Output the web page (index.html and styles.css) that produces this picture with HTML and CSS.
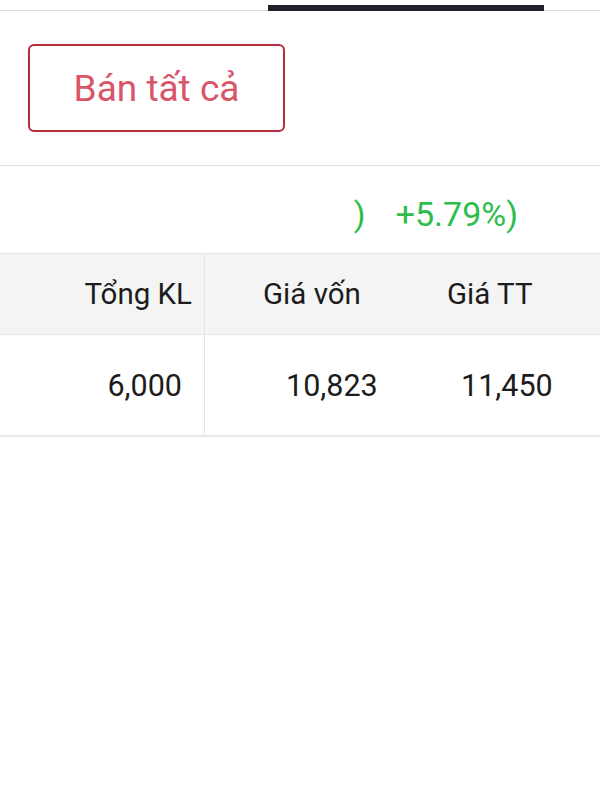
FILE: index.html
```html
<!DOCTYPE html>
<html lang="vi">
  <head>
    <meta charset="UTF-8" />
    <meta name="viewport" content="width=device-width, initial-scale=1.0" />
    <link rel="stylesheet" href="styles.css">
    <title>Danh mục</title>
  </head>
  <body>
    <div class="tabs">
      <div class="tab-indicator"></div>
    </div>

    <div class="actions">
      <button class="sell-all">Bán tất cả</button>
    </div>

    <div class="summary">
      <span class="gain">)</span>
      <span class="gain gain-pct">+5.79%)</span>
    </div>

    <div class="holdings">
      <div class="row head">
        <div class="cell qty">Tổng KL</div>
        <div class="cell cost">Giá vốn</div>
        <div class="cell price">Giá TT</div>
      </div>
      <div class="row">
        <div class="cell qty">6,000</div>
        <div class="cell cost">10,823</div>
        <div class="cell price">11,450</div>
      </div>
    </div>
  </body>
</html>
```

FILE: styles.css
```css
body {
  margin: 0;
  font-family: Roboto, "Liberation Sans", sans-serif;
  color: #1c1c1c;
  background: #fff;
}

.tabs {
  box-sizing: border-box;
  height: 11px;
  padding-top: 5px;
  border-bottom: 1px solid #dcdcdc;
}

.tab-indicator {
  width: 276px;
  height: 6px;
  margin-left: 268px;
  background: #1f2328;
}

.actions {
  padding: 33px 0 33px 28px;
  border-bottom: 1px solid #e2e2e2;
}

.sell-all {
  box-sizing: border-box;
  width: 257px;
  height: 88px;
  border: 2px solid #b12c3c;
  border-radius: 6px;
  background: #fff;
  color: #d9556a;
  font-family: inherit;
  font-size: 37px;
  padding: 0;
}

.summary {
  box-sizing: border-box;
  height: 87px;
  display: flex;
  align-items: center;
  justify-content: flex-end;
  gap: 30px;
  padding: 8px 82px 0 0;
}

.gain {
  color: #2dbd4b;
  font-size: 34px;
}

.holdings {
  border-top: 1px solid #e6e6e6;
}

.row {
  display: grid;
  grid-template-columns: 205px 215px 1fr;
  height: 100px;
  border-bottom: 2px solid #e8e8e8;
  font-size: 30.5px;
}

.row.head {
  height: 80px;
  border-bottom: 1px solid #e6e6e6;
  background: #f4f4f4;
  font-size: 29.5px;
}

.cell {
  display: flex;
  align-items: center;
}

.qty {
  justify-content: flex-end;
  padding-right: 22px;
  border-right: 1px solid #e4e4e4;
}

.cost {
  padding-left: 81px;
}

.price {
  padding-left: 41px;
}

.head .qty {
  padding-right: 12px;
}

.head .cost {
  padding-left: 58px;
}

.head .price {
  padding-left: 27px;
}
```
